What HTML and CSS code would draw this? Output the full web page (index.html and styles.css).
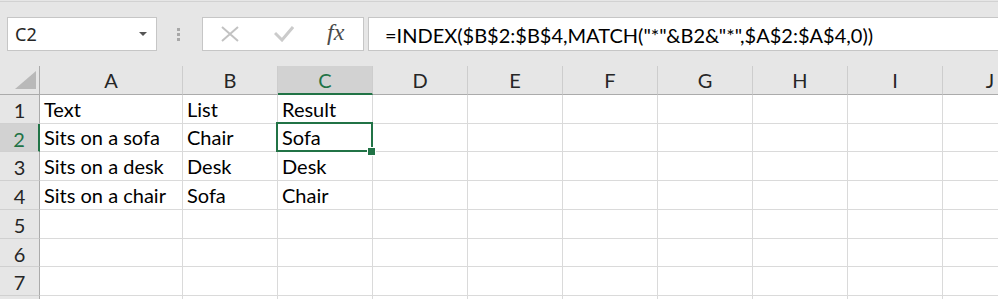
FILE: index.html
```html
<!DOCTYPE html>
<html lang="en">
<head>
    <meta charset="UTF-8">
    <meta name="viewport" content="width=device-width, initial-scale=1.0">
    <title>INDEX MATCH wildcard</title>
    <link rel="stylesheet" href="styles.css">
</head>
<body>
    <div class="formula-bar">
        <div class="name-box">
            <span>C2</span>
            <span class="name-arrow"></span>
        </div>
        <div class="grip"><i></i><i></i><i></i></div>
        <div class="fx-buttons">
            <svg class="btn-icon" width="18" height="16" viewBox="0 0 18 16">
                <path d="M1 1 L17 15 M17 1 L1 15" stroke="#c2c2c2" stroke-width="2" fill="none"/>
            </svg>
            <svg class="btn-icon" width="20" height="16" viewBox="0 0 20 16">
                <path d="M1 7 L8 14 L19 1" stroke="#cbcbcb" stroke-width="3" fill="none"/>
            </svg>
            <span class="fx">fx</span>
        </div>
        <div class="formula-input">=INDEX($B$2:$B$4,MATCH("*"&amp;B2&amp;"*",$A$2:$A$4,0))</div>
    </div>

    <div class="sheet">
        <div class="grid">
            <div class="corner">
                <svg width="39" height="28" viewBox="0 0 39 28">
                    <polygon points="15,23 36,23 36,5" fill="#b9b9b9"/>
                </svg>
            </div>
            <div class="col-head">A</div>
            <div class="col-head">B</div>
            <div class="col-head active">C</div>
            <div class="col-head">D</div>
            <div class="col-head">E</div>
            <div class="col-head">F</div>
            <div class="col-head">G</div>
            <div class="col-head">H</div>
            <div class="col-head">I</div>
            <div class="col-head">J</div>

            <div class="row-head">1</div>
            <div class="cell">Text</div><div class="cell">List</div><div class="cell">Result</div>
            <div class="cell"></div><div class="cell"></div><div class="cell"></div><div class="cell"></div><div class="cell"></div><div class="cell"></div><div class="cell"></div>

            <div class="row-head active">2</div>
            <div class="cell">Sits on a sofa</div><div class="cell">Chair</div><div class="cell selected">Sofa</div>
            <div class="cell"></div><div class="cell"></div><div class="cell"></div><div class="cell"></div><div class="cell"></div><div class="cell"></div><div class="cell"></div>

            <div class="row-head">3</div>
            <div class="cell">Sits on a desk</div><div class="cell">Desk</div><div class="cell">Desk</div>
            <div class="cell"></div><div class="cell"></div><div class="cell"></div><div class="cell"></div><div class="cell"></div><div class="cell"></div><div class="cell"></div>

            <div class="row-head">4</div>
            <div class="cell">Sits on a chair</div><div class="cell">Sofa</div><div class="cell">Chair</div>
            <div class="cell"></div><div class="cell"></div><div class="cell"></div><div class="cell"></div><div class="cell"></div><div class="cell"></div><div class="cell"></div>

            <div class="row-head">5</div>
            <div class="cell"></div><div class="cell"></div><div class="cell"></div>
            <div class="cell"></div><div class="cell"></div><div class="cell"></div><div class="cell"></div><div class="cell"></div><div class="cell"></div><div class="cell"></div>

            <div class="row-head">6</div>
            <div class="cell"></div><div class="cell"></div><div class="cell"></div>
            <div class="cell"></div><div class="cell"></div><div class="cell"></div><div class="cell"></div><div class="cell"></div><div class="cell"></div><div class="cell"></div>

            <div class="row-head">7</div>
            <div class="cell"></div><div class="cell"></div><div class="cell"></div>
            <div class="cell"></div><div class="cell"></div><div class="cell"></div><div class="cell"></div><div class="cell"></div><div class="cell"></div><div class="cell"></div>

            <div class="row-head"></div>
            <div class="cell"></div><div class="cell"></div><div class="cell"></div>
            <div class="cell"></div><div class="cell"></div><div class="cell"></div><div class="cell"></div><div class="cell"></div><div class="cell"></div><div class="cell"></div>
        </div>
    </div>
</body>
</html>
```

FILE: styles.css
```css
* {
    box-sizing: border-box;
}
html, body {
    margin: 0;
    height: 100%;
    overflow: hidden;
    background-color: #e6e6e6;
}
body {
    font-family: Lato, "Liberation Sans", sans-serif;
}
.formula-bar {
    display: flex;
    align-items: stretch;
    height: 65px;
    margin-top: 1px;
    padding: 15px 0 15px 7px;
    border-top: 1px solid #d2d2d2;
}
.name-box {
    width: 150px;
    display: flex;
    align-items: center;
    justify-content: space-between;
    padding: 0 9px 0 7px;
    background-color: #fff;
    border: 1px solid #c6c6c6;
    font-family: "Noto Sans", sans-serif;
    font-size: 18px;
    color: #262626;
}
.name-arrow {
    width: 0;
    height: 0;
    border-left: 4px solid transparent;
    border-right: 4px solid transparent;
    border-top: 4px solid #555;
}
.grip {
    width: 45px;
    display: flex;
    flex-direction: column;
    align-items: center;
    justify-content: center;
    gap: 2px;
    padding-right: 2px;
}
.grip i {
    display: block;
    width: 3px;
    height: 3px;
    background-color: #a8a8a8;
}
.fx-buttons {
    width: 162px;
    display: flex;
    align-items: center;
    padding-left: 18px;
    background-color: #fff;
    border: 1px solid #c6c6c6;
}
.btn-icon {
    margin-right: 35px;
}
.fx-buttons .btn-icon + .btn-icon {
    margin-right: 33px;
}
.fx {
    font-family: "Liberation Serif", serif;
    font-style: italic;
    font-size: 24px;
    color: #4a4a4a;
    margin-top: -3px;
}
.formula-input {
    flex: 1;
    display: flex;
    align-items: center;
    margin-left: 4px;
    margin-right: -2px;
    padding-left: 16px;
    padding-top: 1px;
    background-color: #fff;
    border: 1px solid #c6c6c6;
    font-size: 20px;
    color: #000;
    white-space: nowrap;
}
.sheet {
    overflow: hidden;
    background-color: #fff;
    height: 233px;
}
.grid {
    display: grid;
    grid-template-columns: 40px 143px repeat(9, 95px);
    grid-template-rows: 29px 29px 28px 29px 29px 29px 28px 29px 29px;
    width: 1037px;
    font-size: 20px;
}
.corner {
    background-color: #e6e6e6;
    border-right: 1px solid #ababab;
    border-bottom: 1px solid #ababab;
}
.corner svg {
    display: block;
}
.col-head {
    display: flex;
    align-items: center;
    justify-content: center;
    background-color: #e6e6e6;
    border-right: 1px solid #cdcdcd;
    border-bottom: 1px solid #ababab;
    color: #262626;
}
.col-head.active {
    background-color: #d2d2d2;
    color: #217346;
    border-bottom: 2px solid #217346;
}
.row-head {
    display: flex;
    align-items: center;
    justify-content: center;
    padding-top: 2px;
    background-color: #e6e6e6;
    border-right: 1px solid #ababab;
    border-bottom: 1px solid #d0d0d0;
    color: #262626;
}
.row-head.active {
    background-color: #d2d2d2;
    color: #217346;
    border-right: 2px solid #217346;
}
.cell {
    display: flex;
    align-items: flex-end;
    padding: 0 0 2px 4px;
    border-right: 1px solid #dadada;
    border-bottom: 1px solid #dadada;
    white-space: nowrap;
    color: #000;
}
.cell.selected {
    position: relative;
}
.cell.selected::before {
    content: "";
    position: absolute;
    top: -2px;
    left: -2px;
    right: -1px;
    bottom: -1px;
    border: 2px solid #217346;
}
.cell.selected::after {
    content: "";
    position: absolute;
    right: -4px;
    bottom: -5px;
    width: 7px;
    height: 7px;
    background-color: #217346;
    border: 1px solid #fff;
}
```
